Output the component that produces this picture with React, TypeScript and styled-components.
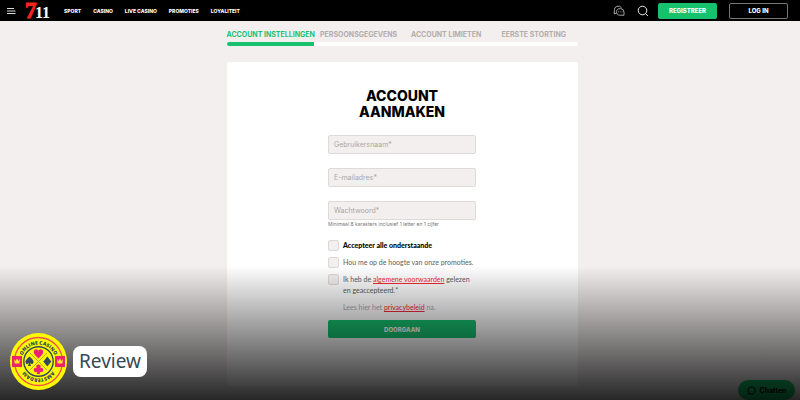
import React from "react";
import styled, { createGlobalStyle } from "styled-components";

const green = "#17c26f";

const GlobalStyle = createGlobalStyle`
  *, *::before, *::after { box-sizing: border-box; }
  body { margin: 0; background: #f3efee; font-family: Inter, "Open Sans", sans-serif; }
  button, input { font: inherit; }
`;

const Page = styled.div`
  position: relative;
  min-height: 100vh;
  display: flex;
  flex-direction: column;
`;

const Header = styled.header`
  display: flex;
  align-items: center;
  height: 21px;
  padding: 0 12px 0 6px;
  background: #000;
  color: #fff;
`;

const IconButton = styled.button`
  display: flex;
  padding: 0;
  border: 0;
  background: none;
  color: inherit;
`;

const Logo = styled.a`
  display: flex;
  margin: 0 14px 0 8px;
`;

const Nav = styled.nav`
  display: flex;
  gap: 12px;
  flex: 1;
`;

const NavLink = styled.a`
  color: #fff;
  font-size: 5px;
  font-weight: 800;
  line-height: 8px;
  text-decoration: none;
`;

const Actions = styled.div`
  display: flex;
  align-items: center;
  gap: 12px;
`;

const IconGroup = styled.div`
  display: flex;
  align-items: center;
  gap: 12px;
  margin-right: -3px;
`;

const HeaderButton = styled.button<{ $outline?: boolean }>`
  width: 59px;
  height: 16px;
  padding: 0;
  border: 1px solid ${(p) => (p.$outline ? "#777" : green)};
  border-radius: 2px;
  background: ${(p) => (p.$outline ? "#000" : green)};
  color: #fff;
  font-size: 6px;
  font-weight: 800;
`;

const Main = styled.main`
  display: flex;
  justify-content: center;
  padding: 10px 0 14px 4px;
`;

const Registration = styled.div`
  flex: 1;
  max-width: 351px;
`;

const Steps = styled.ol`
  display: grid;
  grid-template-columns: repeat(4, 1fr);
  margin: 0;
  padding: 0;
  list-style: none;
`;

const Step = styled.li<{ $active?: boolean }>`
  color: ${(p) => (p.$active ? green : "#b1adab")};
  font-size: 7px;
  font-weight: 700;
  line-height: 8px;
  text-align: center;
  white-space: nowrap;
`;

const Track = styled.div`
  height: 4px;
  margin: 3px 0 16px;
  border-radius: 2px;
  background: #fff;
  overflow: hidden;
`;

const Progress = styled.div`
  width: 25%;
  height: 100%;
  background: ${green};
`;

const Card = styled.section`
  padding: 26px 20px 48px;
  border-radius: 2px;
  background: #fff;
`;

const Title = styled.h1`
  margin: 0 0 15px;
  color: #000;
  font-size: 14px;
  font-weight: 800;
  line-height: 16px;
  text-align: center;
`;

const TitleLine = styled.span`
  display: block;
`;

const Form = styled.form`
  display: flex;
  flex-direction: column;
  max-width: 148px;
  margin: 0 auto;
`;

const Fields = styled.div`
  display: grid;
  gap: 14px;
`;

const Input = styled.input`
  width: 100%;
  height: 19px;
  padding: 0 5px;
  border: 1px solid #dfdada;
  border-radius: 2px;
  background: #f3efee;
  color: #333;
  font-size: 7px;
  &::placeholder { color: #aaa6a6; opacity: 1; }
`;

const Hint = styled.small`
  margin: 1px 0 12px;
  color: #777;
  font-size: 5px;
  line-height: 7px;
  white-space: nowrap;
`;

const CheckRow = styled.label<{ $strong?: boolean }>`
  display: flex;
  align-items: flex-start;
  gap: 4px;
  margin-bottom: 6px;
  color: ${(p) => (p.$strong ? "#000" : "#5c5c5c")};
  font-family: Lato, sans-serif;
  font-size: 7px;
  font-weight: ${(p) => (p.$strong ? 900 : 400)};
  line-height: 11px;
  white-space: nowrap;
`;

const Checkbox = styled.input`
  appearance: none;
  flex: none;
  width: 11px;
  height: 11px;
  margin: 0;
  border: 1px solid #ddd7d7;
  border-radius: 2px;
  background: #f3efee;
  &:checked { background: ${green}; }
`;

const TextLink = styled.a`
  color: #f22b35;
  text-decoration: underline;
`;

const Privacy = styled.p`
  margin: 0 0 8px;
  padding-left: 15px;
  color: #a9a9a9;
  font-family: Lato, sans-serif;
  font-size: 7px;
  line-height: 10px;
`;

const Submit = styled.button`
  height: 18px;
  padding: 0;
  border: 0;
  border-radius: 2px;
  background: ${green};
  color: #fff;
  font-size: 6px;
  font-weight: 800;
`;

const ChatButton = styled.button`
  position: absolute;
  right: 5px;
  bottom: 0;
  display: flex;
  align-items: center;
  justify-content: center;
  gap: 4px;
  width: 57px;
  height: 20px;
  padding: 0;
  border: 0;
  border-radius: 10px;
  background: #14c66b;
  color: #000;
  font-size: 7px;
  font-weight: 700;
`;

const Shade = styled.div`
  position: absolute;
  inset: auto 0 0;
  height: 134px;
  background: linear-gradient(rgba(0, 0, 0, 0), rgba(0, 0, 0, 0.84));
  pointer-events: none;
`;

const Branding = styled.div`
  position: absolute;
  left: 10px;
  bottom: 10px;
  display: flex;
  align-items: center;
  gap: 6px;
`;

const ReviewTag = styled.span`
  padding: 0 6px;
  border-radius: 8px;
  background: #fff;
  color: #364955;
  font-family: "Noto Sans", sans-serif;
  font-size: 19px;
  line-height: 31px;
`;

const MenuIcon = () => (
  <svg width="10" height="8" viewBox="0 0 10 8" stroke="#ddd" strokeWidth="1" aria-hidden="true">
    <path d="M1 1.5h7M1 4h8.5M1 6.5h8.5" />
  </svg>
);

const BubblesIcon = () => (
  <svg width="12" height="12" viewBox="0 0 12 12" fill="none" stroke="#ccc" strokeWidth="0.8" aria-hidden="true">
    <path d="M3 8.2 1.3 9V5.4A4 4 0 0 1 8.7 3" />
    <path d="M11 10.2H6.8a3.3 3.3 0 1 1 .7-6.5A3.5 3.5 0 0 1 11 7.2z" />
    <path d="M5 6.8h.8m1 0h.8m1 0h.8" />
  </svg>
);

const SearchIcon = () => (
  <svg width="12" height="12" viewBox="0 0 12 12" fill="none" stroke="#eee" strokeWidth="1" aria-hidden="true">
    <circle cx="5.5" cy="5.5" r="4.3" />
    <path d="m8.6 8.6 2.3 2.4" />
  </svg>
);

const ChatIcon = () => (
  <svg width="9" height="9" viewBox="0 0 9 9" fill="none" stroke="#000" strokeWidth="1" aria-hidden="true">
    <path d="M1.3 8 1.6 6.4A3.6 3.6 0 1 1 3 7.7z" />
  </svg>
);

const LogoMark = () => (
  <svg width="26" height="21" viewBox="0 0 26 21" overflow="visible" role="img" aria-label="711">
    <g fontFamily="Liberation Serif, serif" fontWeight="700">
      <text x="1" y="18" fontSize="23" fill="#fb2320" stroke="#fb2320" strokeWidth="1">7</text>
      <text x="11" y="18" fontSize="16" fill="#fff">11</text>
    </g>
  </svg>
);

const Crown = ({ x }: { x: number }) => (
  <g transform={`translate(${x} 28)`}>
    <path d="M-5-5H5V6H-5z" fill="#ed2469" />
    <path d="M-3-2-1.5 0 0-2.5 1.5 0 3-2 2.3 2.5H-2.3z" fill="#ffe23a" />
  </g>
);

const Badge = () => (
  <svg width="57" height="57" viewBox="0 0 57 57" role="img" aria-label="Online Casino Amsterdam">
    <defs>
      <path id="arc-top" d="M11.5 28.5a17 17 0 0 1 34 0" />
      <path id="arc-bottom" d="M45.5 28.5a17 17 0 0 1-34 0" />
    </defs>
    <circle cx="28.5" cy="28.5" r="28.5" fill="#fdf900" />
    <circle cx="28.5" cy="28.5" r="24" fill="none" stroke="#f0524a" strokeWidth="1.3" />
    <circle cx="28.5" cy="28.5" r="14.7" fill="none" stroke="#34495a" strokeWidth="1.4" />
    <g fontFamily="Open Sans, sans-serif" fontSize="5" fontWeight="800" fill="#34495a" textAnchor="middle">
      <text><textPath href="#arc-top" startOffset="50%">ONLINE CASINO</textPath></text>
      <text><textPath href="#arc-bottom" startOffset="50%">AMSTERDAM</textPath></text>
    </g>
    <path d="M20 20 37 37M37 20 20 37" stroke="#9b9c32" strokeWidth="0.8" />
    <path d="M28.5 25.5C25 22 23.8 21 23.8 18.8c0-3 3.6-3.4 4.7-1 1.1-2.4 4.7-2 4.7 1 0 2.2-1.2 3.2-4.7 6.7z" fill="#f01f75" />
    <g fill="#f01f75">
      <circle cx="28.5" cy="33.8" r="2.3" />
      <circle cx="26" cy="37" r="2.3" />
      <circle cx="31" cy="37" r="2.3" />
      <path d="M28 35h1l1.2 6h-3.4z" />
    </g>
    <path d="M19.5 23.5c3 3 4 3.7 4 5.4 0 2.2-2.4 2.6-3.5 1.2l1 3h-3l1-3c-1.1 1.4-3.5 1-3.5-1.2 0-1.7 1-2.4 4-5.4z" fill="#34495a" />
    <path d="m37.3 23.5 4 5-4 5-4-5z" fill="#34495a" />
    <Crown x={7} />
    <Crown x={50} />
  </svg>
);

const navItems = ["SPORT", "CASINO", "LIVE CASINO", "PROMOTIES", "LOYALITEIT"];
const steps = ["ACCOUNT INSTELLINGEN", "PERSOONSGEGEVENS", "ACCOUNT LIMIETEN", "EERSTE STORTING"];

export default function App() {
  return (
    <>
      <GlobalStyle />
      <Page>
        <Header>
          <IconButton aria-label="Menu"><MenuIcon /></IconButton>
          <Logo href="#"><LogoMark /></Logo>
          <Nav>
            {navItems.map((item) => <NavLink key={item} href="#">{item}</NavLink>)}
          </Nav>
          <Actions>
            <IconGroup>
              <IconButton aria-label="Berichten"><BubblesIcon /></IconButton>
              <IconButton aria-label="Zoeken"><SearchIcon /></IconButton>
            </IconGroup>
            <HeaderButton>REGISTREER</HeaderButton>
            <HeaderButton $outline>LOG IN</HeaderButton>
          </Actions>
        </Header>
        <Main>
          <Registration>
            <Steps>
              {steps.map((step, i) => <Step key={step} $active={i === 0}>{step}</Step>)}
            </Steps>
            <Track><Progress /></Track>
            <Card>
              <Title>
                <TitleLine>ACCOUNT</TitleLine>
                <TitleLine>AANMAKEN</TitleLine>
              </Title>
              <Form onSubmit={(e) => e.preventDefault()}>
                <Fields>
                  <Input aria-label="Gebruikersnaam" placeholder="Gebruikersnaam*" />
                  <Input type="email" aria-label="E-mailadres" placeholder="E-mailadres*" />
                  <Input type="password" aria-label="Wachtwoord" placeholder="Wachtwoord*" />
                </Fields>
                <Hint>Minimaal 8 karakters inclusief 1 letter en 1 cijfer</Hint>
                <CheckRow $strong><Checkbox type="checkbox" />Accepteer alle onderstaande</CheckRow>
                <CheckRow><Checkbox type="checkbox" />Hou me op de hoogte van onze promoties.</CheckRow>
                <CheckRow>
                  <Checkbox type="checkbox" />
                  <span>Ik heb de <TextLink href="#">algemene voorwaarden</TextLink> gelezen<br />en geaccepteerd.*</span>
                </CheckRow>
                <Privacy>Lees hier het <TextLink href="#">privacybeleid</TextLink> na.</Privacy>
                <Submit type="submit">DOORGAAN</Submit>
              </Form>
            </Card>
          </Registration>
        </Main>
        <ChatButton><ChatIcon />Chatten</ChatButton>
        <Shade />
        <Branding>
          <Badge />
          <ReviewTag>Review</ReviewTag>
        </Branding>
      </Page>
    </>
  );
}
